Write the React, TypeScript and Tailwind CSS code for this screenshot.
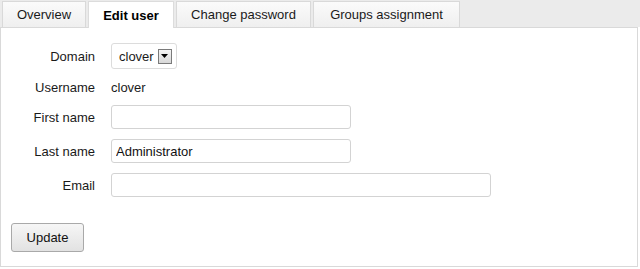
import React from 'react'

const tabs = [
  { label: 'Overview', active: false, w: 'w-[84px]' },
  { label: 'Edit user', active: true, w: 'w-[86px]' },
  { label: 'Change password', active: false, w: 'w-[135px]' },
  { label: 'Groups assignment', active: false, w: 'w-[147px]' },
]

function Field({ label, children }: { label: string; children: React.ReactNode }) {
  return (
    <div className="flex items-center">
      <div className="w-[94px] text-right text-[#1a1a1a]">{label}</div>
      <div className="ml-[16px] flex items-center">{children}</div>
    </div>
  )
}

function TextInput({ value = '', wide = false }: { value?: string; wide?: boolean }) {
  return (
    <input
      readOnly
      value={value}
      className={`${wide ? 'w-[380px]' : 'w-[240px]'} h-[24px] rounded-[3px] border border-[#d3d3d3] bg-white px-[4px] text-[13px] text-[#111] outline-none`}
    />
  )
}

export default function App() {
  return (
    <div className="w-[640px] h-[269px] bg-white text-[13px] leading-none text-[#1a1a1a] font-['Liberation_Sans',Arial,sans-serif]">
      {/* tab strip */}
      <div className="flex h-[27px] items-end gap-[2px] bg-[#ebebeb] pl-[2px] pr-[2px]">
        {tabs.map((t) => (
          <div
            key={t.label}
            className={`${t.w} relative flex h-[26px] items-center justify-center border border-b-0 ${
              t.active
                ? 'z-10 mb-[-1px] h-[27px] border-[#dcdcdc] bg-white font-bold text-black'
                : 'border-[#d9d9d9] bg-gradient-to-b from-[#fbfbfb] to-[#efefef] text-[#1a1a1a]'
            }`}
          >
            {t.label}
          </div>
        ))}
      </div>

      {/* panel */}
      <div className="h-[240px] w-[638px] border border-[#d9d9d9] bg-white">
        <div className="flex flex-col pt-[15px]">
          <Field label="Domain">
            <div className="flex h-[26px] w-[66px] items-center rounded-[3px] border border-[#dcdcdc] pl-[7px]">
              <span>clover</span>
              <span className="ml-[4px] flex h-[15px] w-[14px] items-center justify-center border border-[#7a7a7a] bg-gradient-to-b from-[#f4f4f4] to-[#d8d8d8]">
                <svg width="7" height="4" viewBox="0 0 7 4">
                  <path d="M0 0h7L3.5 4z" fill="#000" />
                </svg>
              </span>
            </div>
          </Field>
          <div className="mt-[6px]">
            <Field label="Username">
              <div className="flex h-[24px] items-center">clover</div>
            </Field>
          </div>
          <div className="mt-[6px]">
            <Field label="First name">
              <TextInput />
            </Field>
          </div>
          <div className="mt-[10px]">
            <Field label="Last name">
              <TextInput value="Administrator" />
            </Field>
          </div>
          <div className="mt-[10px]">
            <Field label="Email">
              <TextInput wide />
            </Field>
          </div>
          <div className="mt-[26px] pl-[10px]">
            <button className="h-[29px] w-[73px] rounded-[3px] border border-[#a9a9a9] bg-gradient-to-b from-[#f6f6f6] to-[#e2e2e2] text-[13px] text-[#111]">
              Update
            </button>
          </div>
        </div>
      </div>
    </div>
  )
}
